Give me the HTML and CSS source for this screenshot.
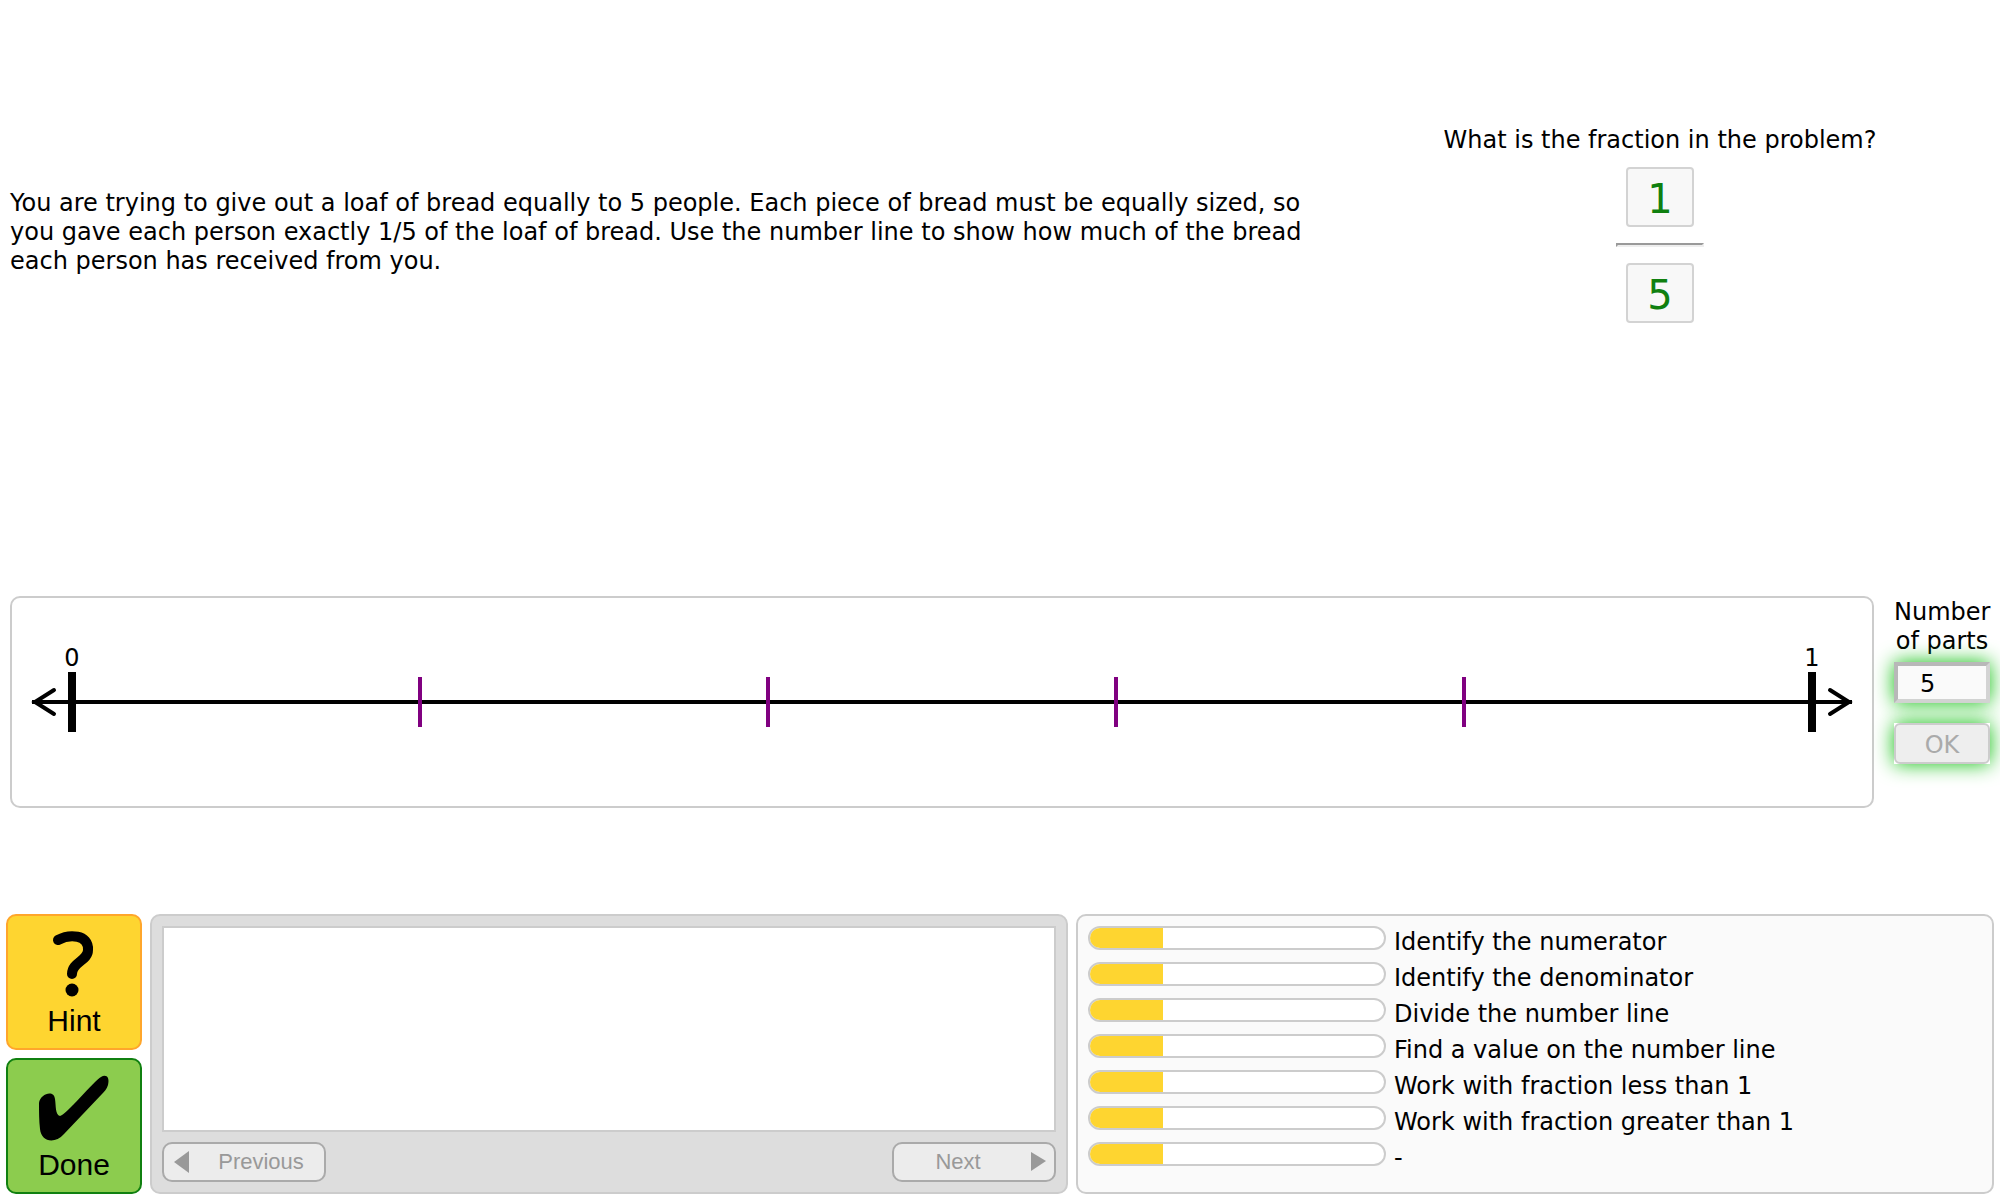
FILE: index.html
```html
<!DOCTYPE html>
<html lang="en">
<head>
<meta charset="utf-8">
<title>Fractions on a number line</title>
<link rel="stylesheet" href="styles.css">
</head>
<body>
<main class="tutor">
  <section class="problem">
    <p class="statement">You are trying to give out a loaf of bread equally to 5 people. Each piece of bread must be equally sized, so<br>you gave each person exactly 1/5 of the loaf of bread. Use the number line to show how much of the bread<br>each person has received from you.</p>
    <div class="question" role="group" aria-labelledby="question-text">
      <p id="question-text">What is the fraction in the problem?</p>
      <input class="digit" type="text" value="1" aria-label="Numerator" readonly>
      <hr class="fraction-bar">
      <input class="digit" type="text" value="5" aria-label="Denominator" readonly>
    </div>
  </section>

  <section class="line-row">
    <div class="number-line">
      <div class="axis">
        <svg class="arrow" viewBox="0 0 24 28" aria-hidden="true"><path d="M22 2 3 14l19 12"/></svg>
        <span class="rule"></span>
        <svg class="arrow" viewBox="0 0 24 28" aria-hidden="true"><path d="m2 2 19 12L2 26"/></svg>
      </div>
      <ol class="ticks">
        <li class="tick major"><span>0</span></li>
        <li class="tick"></li>
        <li class="tick"></li>
        <li class="tick"></li>
        <li class="tick"></li>
        <li class="tick major"><span>1</span></li>
      </ol>
    </div>
    <div class="parts">
      <label for="parts">Number of parts</label>
      <input class="parts-input" id="parts" type="text" value="5">
      <button class="ok" type="button" disabled><span>OK</span></button>
    </div>
  </section>

  <section class="tools">
    <div class="actions">
      <button class="action hint" type="button">
        <svg viewBox="0 0 80 80" aria-hidden="true"><path d="M24 18C35 12 55 12 54 28c0 11-16 12-16 24" fill="none" stroke="#000" stroke-width="10" stroke-linecap="round"/><circle cx="38" cy="68" r="6.500"/></svg>
        <span>Hint</span>
      </button>
      <button class="action done" type="button">
        <svg viewBox="0 0 80 80" aria-hidden="true"><path d="M5 37C6 28 20 23 21 33c1 6 0 16 5 17C31 50 60 15 67 11c5-3 9 0 7 8-1 4-4 7-6 9L30 68C20 79 7 75 6 63 5 55 5 45 5 37Z"/></svg>
        <span>Done</span>
      </button>
    </div>
    <div class="hint-window">
      <div class="hint-text"></div>
      <div class="pager">
        <button class="page-button" type="button" disabled><svg viewBox="0 0 16 22" aria-hidden="true"><path d="M15 0v22L0 11Z"/></svg><span>Previous</span></button>
        <button class="page-button" type="button" disabled><span>Next</span><svg viewBox="0 0 16 22" aria-hidden="true"><path d="M1 1v19l15-10Z"/></svg></button>
      </div>
    </div>
    <ul class="skills">
      <li><span class="bar"><i class="fill" style="width:25%"></i></span><span class="skill">Identify the numerator</span></li>
      <li><span class="bar"><i class="fill" style="width:25%"></i></span><span class="skill">Identify the denominator</span></li>
      <li><span class="bar"><i class="fill" style="width:25%"></i></span><span class="skill">Divide the number line</span></li>
      <li><span class="bar"><i class="fill" style="width:25%"></i></span><span class="skill">Find a value on the number line</span></li>
      <li><span class="bar"><i class="fill" style="width:25%"></i></span><span class="skill">Work with fraction less than 1</span></li>
      <li><span class="bar"><i class="fill" style="width:25%"></i></span><span class="skill">Work with fraction greater than 1</span></li>
      <li><span class="bar"><i class="fill" style="width:25%"></i></span><span class="skill">-</span></li>
    </ul>
  </section>
</main>
</body>
</html>
```
FILE: styles.css
```css
* { box-sizing: border-box; }

body {
  margin: 0;
  background: #fff;
  color: #000;
  font: 24px/29px Verdana, "DejaVu Sans", sans-serif;
}

p, ol, ul { margin: 0; padding: 0; list-style: none; }
input, button { margin: 0; font: inherit; }

.tutor {
  display: flex;
  flex-direction: column;
  min-height: 100vh;
}

.problem {
  display: grid;
  grid-template-columns: 2fr 1fr;
  align-items: center;
  padding: 126px 10px 0;
}

.question {
  display: flex;
  flex-direction: column;
  align-items: center;
  padding-bottom: 16px;
}

.digit {
  width: 68px;
  height: 60px;
  padding: 4px 0 0;
  margin-top: 12px;
  border: 2px solid #d3d3d3;
  border-radius: 4px;
  background: #f8f8f8;
  color: #108010;
  font-size: 40px;
  text-align: center;
}

.fraction-bar {
  width: 88px;
  margin: 16px 0 0;
  border: 2px inset #eee;
}

.fraction-bar + .digit { margin-top: 16px; }

.line-row {
  display: grid;
  grid-template-columns: 1fr 96px;
  gap: 20px;
  margin-top: auto;
  padding: 0 10px;
}

.number-line {
  display: grid;
  grid-template-rows: 1fr;
  align-items: center;
  height: 212px;
  border: 2px solid #ccc;
  border-radius: 10px;
}

.axis, .ticks {
  grid-area: 1 / 1;
  display: flex;
  align-items: center;
}

.axis { padding: 0 20px; }

.arrow {
  width: 24px;
  height: 28px;
  overflow: visible;
  fill: none;
  stroke: #000;
  stroke-width: 4;
  stroke-linecap: round;
}

.rule {
  flex: 1;
  height: 4px;
  margin: 0 -24px;
  background: #000;
}

.ticks {
  justify-content: space-between;
  padding: 0 56px;
}

.tick {
  display: flex;
  justify-content: center;
  width: 8px;
  height: 50px;
  border: solid transparent;
  border-width: 0 2px;
  background: purple content-box;
}

.tick.major {
  height: 60px;
  border: 0;
  background: #000;
}

.tick span { margin-top: -28px; }

.parts {
  display: flex;
  flex-direction: column;
  padding-top: 2px;
  text-align: center;
}

.parts label { margin-bottom: 6px; }

.parts-input, .ok {
  width: 100%;
  height: 41px;
  box-shadow: 0 0 20px #10c010;
}

.parts-input {
  padding: 2px 22px 0;
  border: 4px solid;
  border-color: #b8b8b8 #d3d3d3 #d3d3d3 #b8b8b8;
  background: #fafafa;
}

.ok {
  display: flex;
  margin-top: 20px;
  padding: 0;
  border: 0;
  background: #fff;
  color: #aaa;
}

.ok span {
  flex: 1;
  align-self: stretch;
  padding-top: 2px;
  border: 2px solid #ccc;
  border-radius: 6px;
  background: #eee;
  line-height: 37px;
}

.tools {
  display: grid;
  grid-template-columns: 136px 1fr 1fr;
  gap: 8px;
  margin-top: 106px;
  padding: 0 6px 6px;
}

.actions {
  display: flex;
  flex-direction: column;
  gap: 8px;
}

.action {
  display: flex;
  flex-direction: column;
  align-items: center;
  height: 136px;
  padding: 6px 0 0;
  border: 2px solid;
  border-radius: 10px;
  color: #000;
  font: 30px/38px "Helvetica Neue", "Liberation Sans", Arial, sans-serif;
}

.action svg { width: 80px; height: 80px; }
.hint { border-color: #ffa62b; background: #fed530; }
.done { border-color: #108010; background: #8ccc4e; }

.hint-window {
  display: flex;
  flex-direction: column;
  gap: 10px;
  padding: 10px;
  border: 2px solid #ccc;
  border-radius: 10px;
  background: #ddd;
}

.hint-text {
  flex: 1;
  border: 2px solid #ccc;
  background: #fff;
}

.pager { display: flex; justify-content: space-between; }

.page-button {
  display: flex;
  align-items: center;
  width: 164px;
  height: 40px;
  padding: 0 8px 0 10px;
  border: 2px solid #aaa;
  border-radius: 10px;
  background: #ececec;
  color: #999;
  font: 22px/26px "Helvetica Neue", "Liberation Sans", Arial, sans-serif;
}

.page-button span { flex: 1; text-align: center; }
.page-button span:first-child { padding-right: 18px; }
.page-button span:last-child { padding-left: 16px; }
.page-button svg { width: 16px; height: 22px; fill: #999; }

.skills {
  display: flex;
  flex-direction: column;
  gap: 5px;
  padding: 10px;
  border: 2px solid #ccc;
  border-radius: 10px;
  background: #fafafa;
}

.skills li {
  display: flex;
  gap: 8px;
}

.skill { padding-top: 2px; }

.bar {
  width: calc(100% / 3);
  height: 24px;
  overflow: hidden;
  border: 2px solid #ccc;
  border-radius: 12px;
  background: #fff;
}

.fill {
  display: block;
  height: 100%;
  background: #fed530;
}
```
